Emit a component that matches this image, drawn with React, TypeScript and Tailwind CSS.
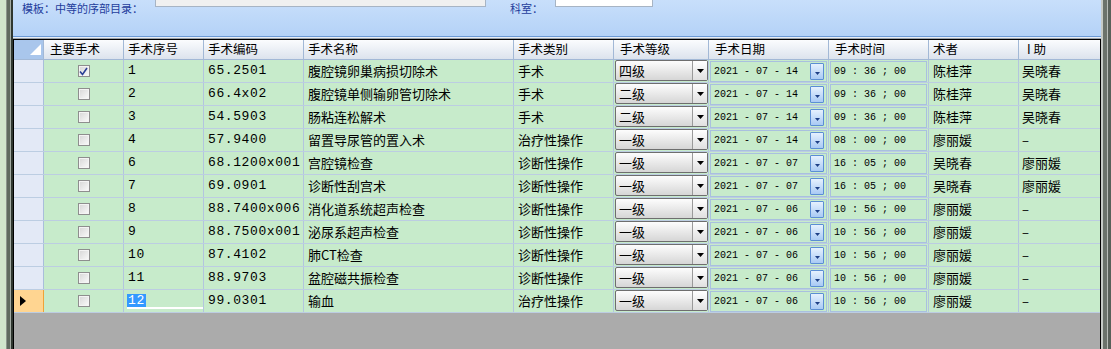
import React from 'react'

interface Row {
  main: boolean
  seq: string
  code: string
  name: string
  kind: string
  level: string
  date: string
  time: string
  surgeon: string
  assist: string
}

const rows: Row[] = [
  { main: true, seq: '1', code: '65.2501', name: '腹腔镜卵巢病损切除术', kind: '手术', level: '四级', date: '2021 - 07 - 14', time: '09 : 36 ; 00', surgeon: '陈桂萍', assist: '吴晓春' },
  { main: false, seq: '2', code: '66.4x02', name: '腹腔镜单侧输卵管切除术', kind: '手术', level: '二级', date: '2021 - 07 - 14', time: '09 : 36 ; 00', surgeon: '陈桂萍', assist: '吴晓春' },
  { main: false, seq: '3', code: '54.5903', name: '肠粘连松解术', kind: '手术', level: '二级', date: '2021 - 07 - 14', time: '09 : 36 ; 00', surgeon: '陈桂萍', assist: '吴晓春' },
  { main: false, seq: '4', code: '57.9400', name: '留置导尿管的置入术', kind: '治疗性操作', level: '一级', date: '2021 - 07 - 14', time: '08 : 00 ; 00', surgeon: '廖丽媛', assist: '–' },
  { main: false, seq: '6', code: '68.1200x001', name: '宫腔镜检查', kind: '诊断性操作', level: '一级', date: '2021 - 07 - 07', time: '16 : 05 ; 00', surgeon: '吴晓春', assist: '廖丽媛' },
  { main: false, seq: '7', code: '69.0901', name: '诊断性刮宫术', kind: '诊断性操作', level: '一级', date: '2021 - 07 - 07', time: '16 : 05 ; 00', surgeon: '吴晓春', assist: '廖丽媛' },
  { main: false, seq: '8', code: '88.7400x006', name: '消化道系统超声检查', kind: '诊断性操作', level: '一级', date: '2021 - 07 - 06', time: '10 : 56 ; 00', surgeon: '廖丽媛', assist: '–' },
  { main: false, seq: '9', code: '88.7500x001', name: '泌尿系超声检查', kind: '诊断性操作', level: '一级', date: '2021 - 07 - 06', time: '10 : 56 ; 00', surgeon: '廖丽媛', assist: '–' },
  { main: false, seq: '10', code: '87.4102', name: '肺CT检查', kind: '诊断性操作', level: '一级', date: '2021 - 07 - 06', time: '10 : 56 ; 00', surgeon: '廖丽媛', assist: '–' },
  { main: false, seq: '11', code: '88.9703', name: '盆腔磁共振检查', kind: '诊断性操作', level: '一级', date: '2021 - 07 - 06', time: '10 : 56 ; 00', surgeon: '廖丽媛', assist: '–' },
  { main: false, seq: '12', code: '99.0301', name: '输血', kind: '治疗性操作', level: '一级', date: '2021 - 07 - 06', time: '10 : 56 ; 00', surgeon: '廖丽媛', assist: '–' },
]

const cjk = "font-['Noto_Sans_CJK_SC',sans-serif] text-[13px] text-black"
const mono = "font-['Liberation_Mono','Noto_Sans_CJK_SC',monospace] text-[13px] tracking-[0.6px] text-black"
const small = "font-['Liberation_Mono',monospace] text-[10px] text-black whitespace-pre"
const line = 'border-r border-[#b3c5de]'

function CheckBox({ checked }: { checked: boolean }) {
  return (
    <div className="flex h-[12px] w-[12px] items-center justify-center border border-[#8e8e8e] bg-linear-to-br from-[#d6d6d6] to-[#fbfbfb] shadow-[inset_0_0_0_1px_#f4f4f4]">
      {checked && (
        <svg width="9" height="9" viewBox="0 0 9 9">
          <path d="M1 4.5 L3.5 7.5 L8 1" stroke="#2b3f96" strokeWidth="1.6" fill="none" />
        </svg>
      )}
    </div>
  )
}

function LevelCombo({ value }: { value: string }) {
  return (
    <div className="flex h-[21px] w-[93px] self-start rounded-[2px] border border-[#6e6e6e] bg-linear-to-b from-[#fdfdfd] to-[#d6d6d6]">
      <div className={`flex flex-1 items-center pl-[3px] ${cjk}`}>{value}</div>
      <div className="flex w-[15px] items-center justify-center border-l border-[#9a9a9a] bg-linear-to-b from-white to-[#e0e0e0]">
        <svg width="7" height="4" viewBox="0 0 7 4">
          <path d="M0 0 H7 L3.5 4 Z" fill="#000" />
        </svg>
      </div>
    </div>
  )
}

function DateBox({ value }: { value: string }) {
  return (
    <div className="ml-[1px] flex h-[21px] w-[117px] items-center self-start border border-[#a9c0df] pl-[3px]">
      <span className={small}>{value}</span>
      <div className="ml-auto mr-[2px] flex h-[17px] w-[14px] items-end justify-center rounded-[1px] border border-[#5b8ed4] bg-linear-to-b from-[#e6f1fe] to-[#a9caf4] pb-[4px]">
        <svg width="5" height="3" viewBox="0 0 5 3">
          <path d="M0 0 H5 L2.5 3 Z" fill="#1d3f86" />
        </svg>
      </div>
    </div>
  )
}

function TimeBox({ value }: { value: string }) {
  return (
    <div className="ml-[1px] flex h-[21px] w-[97px] items-center self-start border border-[#a9c0df] pl-[3px]">
      <span className={small}>{value}</span>
    </div>
  )
}

const headers = [
  { label: '主要手术', w: 'w-[80px]', pl: 'pl-[6px]' },
  { label: '手术序号', w: 'w-[80px]', pl: 'pl-[4px]' },
  { label: '手术编码', w: 'w-[100px]', pl: 'pl-[4px]' },
  { label: '手术名称', w: 'w-[210px]', pl: 'pl-[4px]' },
  { label: '手术类别', w: 'w-[100px]', pl: 'pl-[4px]' },
  { label: '手术等级', w: 'w-[95px]', pl: 'pl-[6px]' },
  { label: '手术日期', w: 'w-[120px]', pl: 'pl-[6px]' },
  { label: '手术时间', w: 'w-[100px]', pl: 'pl-[6px]' },
  { label: '术者', w: 'w-[90px]', pl: 'pl-[4px]' },
  { label: 'I\u00a0助', w: 'w-[81px]', pl: 'pl-[8px]' },
]

export default function App() {
  return (
    <div className="flex h-[349px] w-[1111px] overflow-hidden bg-[#d0e6cb]">
      {/* left frame */}
      <div className="flex shrink-0">
        <div className="w-[6px] bg-[#d0e6cb]" />
        <div className="w-[1px] bg-[#8c968c]" />
        <div className="w-[3px] bg-[#5f6b5f]" />
        <div className="w-[1px] bg-[#a3aba3]" />
        <div className="w-[2px] bg-[#2f372f]" />
      </div>

      <div className="flex w-[1088px] shrink-0 flex-col">
        {/* top panel */}
        <div className="relative h-[37px] shrink-0 overflow-hidden border-b border-[#6b9ad6] bg-linear-to-b from-[#c8dffb] to-[#b4d2f7]">
          <div className="-mt-[10px] flex h-[17px] items-end">
            <span className="ml-[9px] w-[133px] self-start pt-[12px] font-['Noto_Sans_CJK_SC',sans-serif] text-[11px] leading-[13px] text-[#1f3d9c]">
              模板：中等的序部目录：
            </span>
            <div className="h-[17px] w-[331px] border border-[#a7b4c4] bg-[#f0f0f0]" />
            <span className="ml-[24px] w-[45px] self-start pt-[12px] font-['Noto_Sans_CJK_SC',sans-serif] text-[11px] leading-[13px] text-[#1f3d9c]">
              科室：
            </span>
            <div className="h-[17px] w-[98px] border border-[#a7b4c4] bg-white" />
          </div>
        </div>
        <div className="h-[1px] shrink-0 bg-[#e6edf6]" />
        <div className="h-[1px] shrink-0 bg-[#9aa2ac]" />

        {/* grid */}
        <div className="flex flex-1 flex-col border-x border-t border-black bg-[#ababab]">
          {/* header */}
          <div className="flex h-[20px] shrink-0 border-b border-[#a2b8d6] bg-linear-to-b from-[#fbfcfe] to-[#dce3ed]">
            <div className="relative w-[30px] shrink-0 border-r border-[#a2b8d6] bg-[#a9c6ec]">
              <svg className="absolute bottom-[4px] right-[2px]" width="11" height="11" viewBox="0 0 11 11">
                <path d="M11 0 V11 H0 Z" fill="#ffffff" />
              </svg>
            </div>
            {headers.map((h, i) => (
              <div
                key={h.label}
                className={`flex shrink-0 items-center ${h.w} ${h.pl} ${i < headers.length - 1 ? 'border-r border-[#a2b8d6]' : ''} font-['Noto_Sans_CJK_SC',sans-serif] text-[12.5px] text-black`}
              >
                {h.label}
              </div>
            ))}
          </div>

          {/* rows */}
          {rows.map((r, idx) => {
            const current = idx === rows.length - 1
            return (
              <div key={r.seq} className="flex h-[23px] shrink-0 border-b border-[#bccde2] bg-[#c7ebcb]">
                <div
                  className={`flex w-[30px] shrink-0 items-center border-r pl-[6px] ${
                    current ? 'border-[#f0a238] bg-[#ffd591]' : 'border-[#a9bedb] bg-[#e3e9f6]'
                  }`}
                >
                  {current && (
                    <svg width="6" height="10" viewBox="0 0 6 10">
                      <path d="M0 0 L6 5 L0 10 Z" fill="#000" />
                    </svg>
                  )}
                </div>
                <div className={`flex w-[80px] shrink-0 items-center justify-center ${line}`}>
                  <CheckBox checked={r.main} />
                </div>
                <div className={`flex w-[80px] shrink-0 items-center pl-[3px] ${line}`}>
                  {current ? (
                    <div className="flex h-[15px] w-[76px] items-start border-b-2 border-white">
                      <span className={`${mono} bg-[#3399ff] px-[1px] leading-[13px] text-white`}>{r.seq}</span>
                    </div>
                  ) : (
                    <span className={`${mono} pl-[1px]`}>{r.seq}</span>
                  )}
                </div>
                <div className={`flex w-[100px] shrink-0 items-center pl-[4px] ${line}`}>
                  <span className={mono}>{r.code}</span>
                </div>
                <div className={`flex w-[210px] shrink-0 items-center pl-[4px] ${line}`}>
                  <span className={cjk}>{r.name}</span>
                </div>
                <div className={`flex w-[100px] shrink-0 items-center pl-[4px] ${line}`}>
                  <span className={cjk}>{r.kind}</span>
                </div>
                <div className={`flex w-[95px] shrink-0 items-start pl-[1px] ${line}`}>
                  <LevelCombo value={r.level} />
                </div>
                <div className={`flex w-[120px] shrink-0 items-start pt-[1px] ${line}`}>
                  <DateBox value={r.date} />
                </div>
                <div className={`flex w-[100px] shrink-0 items-start pt-[1px] ${line}`}>
                  <TimeBox value={r.time} />
                </div>
                <div className={`flex w-[90px] shrink-0 items-center pl-[4px] ${line}`}>
                  <span className={cjk}>{r.surgeon}</span>
                </div>
                <div className="flex w-[81px] shrink-0 items-center pl-[3px]">
                  <span className={cjk}>{r.assist}</span>
                </div>
              </div>
            )
          })}
        </div>
      </div>

      {/* right frame */}
      <div className="flex shrink-0">
        <div className="w-[2px] bg-[#c6cbc6]" />
        <div className="w-[4px] bg-[#6b736b]" />
        <div className="w-[1px] bg-[#b8bdb8]" />
        <div className="w-[3px] bg-[#59615a]" />
      </div>
    </div>
  )
}
